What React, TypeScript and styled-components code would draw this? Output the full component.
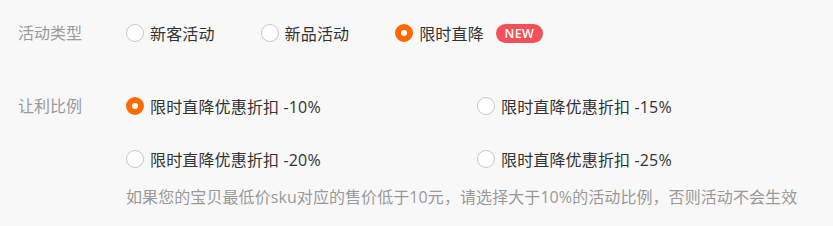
import React, { useState } from "react";
import styled, { createGlobalStyle } from "styled-components";

const Global = createGlobalStyle`
  html, body { margin: 0; padding: 0; background: #f8f8f8; }
  body { font-family: "Open Sans", "Noto Sans CJK SC", sans-serif; }
`;

const Page = styled.div`
  padding: 21px 18px 0 18px;
  display: flex;
  flex-direction: column;
`;

const Row = styled.div<{ $mt?: number }>`
  display: flex;
  align-items: flex-start;
  margin-top: ${(p) => p.$mt ?? 0}px;
`;

const Label = styled.div`
  width: 108px;
  flex: none;
  font-size: 16px;
  line-height: 24px;
  color: #9a9a9a;
`;

const Inline = styled.div`
  display: flex;
  align-items: center;
`;

const Grid = styled.div`
  display: grid;
  grid-template-columns: 351px 351px;
  row-gap: 29px;
`;

const Option = styled.label<{ $mr?: number }>`
  display: flex;
  align-items: center;
  height: 24px;
  margin-right: ${(p) => p.$mr ?? 0}px;
  cursor: pointer;
  font-size: 16px;
  color: #333;
  white-space: pre;
  letter-spacing: 0.15px;
`;

const Dot = styled.span<{ $on: boolean }>`
  width: 18px;
  height: 18px;
  box-sizing: border-box;
  border-radius: 50%;
  margin-right: 6px;
  flex: none;
  border: ${(p) => (p.$on ? "6px solid #ff6a00" : "1px solid #c8c8c8")};
  background: #fff;
`;

const Badge = styled.span`
  margin-left: 12px;
  height: 19px;
  width: 47px;
  border-radius: 10px;
  background: #f4505a;
  color: #fff;
  font-family: "Open Sans", "Noto Sans", sans-serif;
  font-size: 12.5px;
  font-weight: 600;
  display: flex;
  align-items: center;
  justify-content: center;
  letter-spacing: 0.3px;
`;

const Hint = styled.div`
  margin: 14px 0 0 108px;
  font-size: 16px;
  line-height: 24px;
  color: #9a9a9a;
  letter-spacing: 0.08px;
`;

export default function App() {
  const [type, setType] = useState("限时直降");
  const [ratio, setRatio] = useState("-10%");
  const types = ["新客活动", "新品活动", "限时直降"];
  const ratios = ["-10%", "-15%", "-20%", "-25%"];
  return (
    <>
      <Global />
      <Page>
        <Row>
          <Label>活动类型</Label>
          <Inline>
            {types.map((t, i) => (
              <Option key={t} $mr={i < 2 ? 46 : 0} onClick={() => setType(t)}>
                <Dot $on={type === t} />
                {t}
              </Option>
            ))}
            <Badge>NEW</Badge>
          </Inline>
        </Row>
        <Row $mt={49}>
          <Label>让利比例</Label>
          <Grid>
            {ratios.map((r) => (
              <Option key={r} onClick={() => setRatio(r)}>
                <Dot $on={ratio === r} />
                {`限时直降优惠折扣 ${r}`}
              </Option>
            ))}
          </Grid>
        </Row>
        <Hint>如果您的宝贝最低价sku对应的售价低于10元，请选择大于10%的活动比例，否则活动不会生效</Hint>
      </Page>
    </>
  );
}
